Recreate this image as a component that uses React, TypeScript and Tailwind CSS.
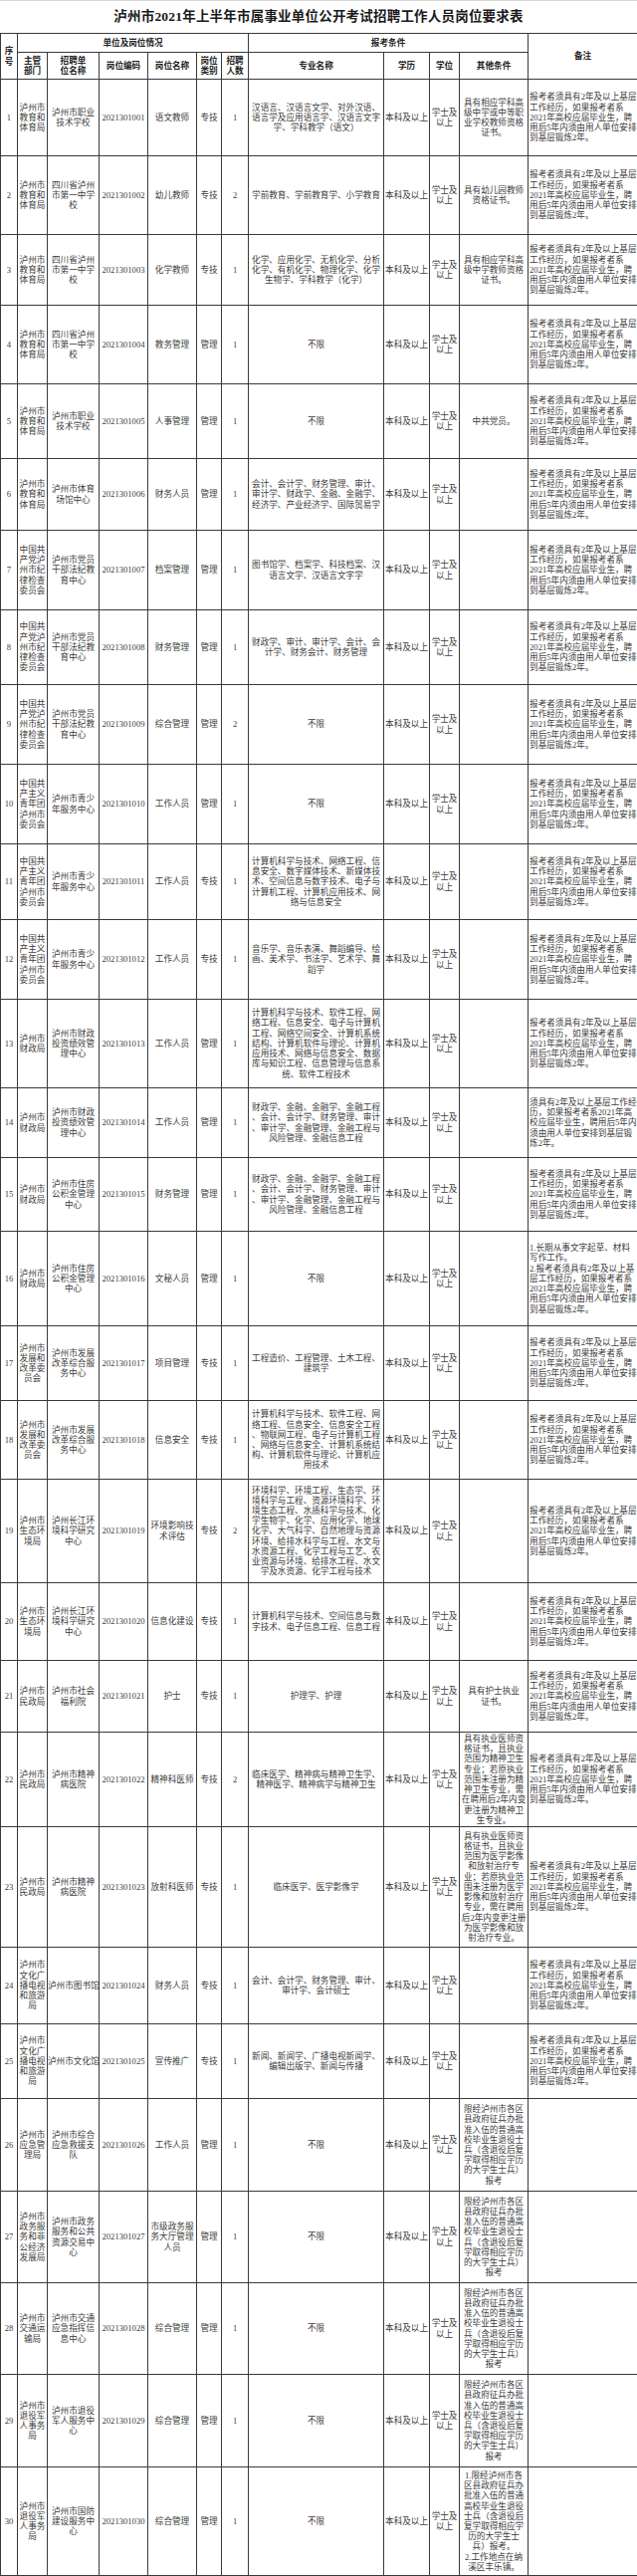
import React from 'react'

type Row = {
  h: string
  dept: string
  unit: string
  name: string
  cat: string
  n: string
  major: string
  other: string
  remark: string
}

const STD =
  '报考者须具有2年及以上基层|工作经历，如果报考者系|2021年高校应届毕业生，聘|用后5年内须由用人单位安排|到基层锻炼2年。'
const SOLDIER =
  '限经泸州市各区|县政府征兵办批|准入伍的普通高|校毕业生退役士|兵（含退役后复|学取得相应学历|的大学生士兵）|报考'

const EDU = '泸州市|教育和|体育局'
const JIW = '中国共|产党泸|州市纪|律检查|委员会'
const TUAN = '中国共|产主义|青年团|泸州市|委员会'
const CZ = '泸州市|财政局'
const FG = '泸州市|发展和|改革委|员会'
const HJ = '泸州市|生态环|境局'
const MZ = '泸州市|民政局'
const WL = '泸州市|文化广|播电视|和旅游|局'
const TY = '泸州市|退役军|人事务|局'
const JR = '财政学、金融、金融学、金融工程|、会计、会计学、财务管理、审计|、审计学、金融管理、金融工程与|风险管理、金融信息工程'

const rows: Row[] = [
  { h: 'h-[77px]', dept: EDU, unit: '泸州市职业|技术学校', name: '语文教师', cat: '专技', n: '1', major: '汉语言、汉语言文学、对外汉语、|语言学及应用语言学、汉语言文字|学、学科教学（语文）', other: '具有相应学科高|级中学或中等职|业学校教师资格|证书。', remark: STD },
  { h: 'h-[79px]', dept: EDU, unit: '四川省泸州|市第一中学|校', name: '幼儿教师', cat: '专技', n: '2', major: '学前教育、学前教育学、小学教育', other: '具有幼儿园教师|资格证书。', remark: STD },
  { h: 'h-[71px]', dept: EDU, unit: '四川省泸州|市第一中学|校', name: '化学教师', cat: '专技', n: '1', major: '化学、应用化学、无机化学、分析|化学、有机化学、物理化学、化学|生物学、学科教学（化学）', other: '具有相应学科高|级中学教师资格|证书。', remark: STD },
  { h: 'h-[79px]', dept: EDU, unit: '四川省泸州|市第一中学|校', name: '教务管理', cat: '管理', n: '1', major: '不限', other: '', remark: STD },
  { h: 'h-[75px]', dept: EDU, unit: '泸州市职业|技术学校', name: '人事管理', cat: '管理', n: '1', major: '不限', other: '中共党员。', remark: STD },
  { h: 'h-[72px]', dept: EDU, unit: '泸州市体育|场馆中心', name: '财务人员', cat: '管理', n: '1', major: '会计、会计学、财务管理、审计、|审计学、财政学、金融、金融学、|经济学、产业经济学、国际贸易学', other: '', remark: STD },
  { h: 'h-[80px]', dept: JIW, unit: '泸州市党员|干部法纪教|育中心', name: '档案管理', cat: '管理', n: '1', major: '图书馆学、档案学、科技档案、汉|语言文学、汉语言文字学', other: '', remark: STD },
  { h: 'h-[75px]', dept: JIW, unit: '泸州市党员|干部法纪教|育中心', name: '财务管理', cat: '管理', n: '1', major: '财政学、审计、审计学、会计、会|计学、财务会计、财务管理', other: '', remark: STD },
  { h: 'h-[80px]', dept: JIW, unit: '泸州市党员|干部法纪教|育中心', name: '综合管理', cat: '管理', n: '2', major: '不限', other: '', remark: STD },
  { h: 'h-[80px]', dept: TUAN, unit: '泸州市青少|年服务中心', name: '工作人员', cat: '管理', n: '1', major: '不限', other: '', remark: STD },
  { h: 'h-[76px]', dept: TUAN, unit: '泸州市青少|年服务中心', name: '工作人员', cat: '专技', n: '1', major: '计算机科学与技术、网络工程、信|息安全、数字媒体技术、新媒体技|术、空间信息与数字技术、电子与|计算机工程、计算机应用技术、网|络与信息安全', other: '', remark: STD },
  { h: 'h-[80px]', dept: TUAN, unit: '泸州市青少|年服务中心', name: '工作人员', cat: '专技', n: '1', major: '音乐学、音乐表演、舞蹈编导、绘|画、美术学、书法学、艺术学、舞|蹈学', other: '', remark: STD },
  { h: 'h-[89px]', dept: CZ, unit: '泸州市财政|投资绩效管|理中心', name: '工作人员', cat: '管理', n: '1', major: '计算机科学与技术、软件工程、网|络工程、信息安全、电子与计算机|工程、网络空间安全、计算机系统|结构、计算机软件与理论、计算机|应用技术、网络与信息安全、数据|库与知识工程、信息管理与信息系|统、软件工程技术', other: '', remark: STD },
  { h: 'h-[70px]', dept: CZ, unit: '泸州市财政|投资绩效管|理中心', name: '工作人员', cat: '管理', n: '1', major: JR, other: '', remark: '须具有2年及以上基层工作经|历，如果报考者系2021年高|校应届毕业生，聘用后5年内|须由用人单位安排到基层锻|炼2年。' },
  { h: 'h-[74px]', dept: CZ, unit: '泸州市住房|公积金管理|中心', name: '财务管理', cat: '管理', n: '1', major: JR, other: '', remark: STD },
  { h: 'h-[95px]', dept: CZ, unit: '泸州市住房|公积金管理|中心', name: '文秘人员', cat: '管理', n: '1', major: '不限', other: '', remark: '1.长期从事文字起草、材料|写作工作。|2.报考者须具有2年及以上基|层工作经历，如果报考者系|2021年高校应届毕业生，聘|用后5年内须由用人单位安排|到基层锻炼2年。' },
  { h: 'h-[75px]', dept: FG, unit: '泸州市发展|改革综合服|务中心', name: '项目管理', cat: '专技', n: '1', major: '工程造价、工程管理、土木工程、|建筑学', other: '', remark: STD },
  { h: 'h-[79px]', dept: FG, unit: '泸州市发展|改革综合服|务中心', name: '信息安全', cat: '专技', n: '1', major: '计算机科学与技术、软件工程、网|络工程、信息安全、信息安全工程|、物联网工程、电子与计算机工程|、网络与信息安全、计算机系统结|构、计算机软件与理论、计算机应|用技术', other: '', remark: STD },
  { h: 'h-[104px]', dept: HJ, unit: '泸州长江环|境科学研究|中心', name: '环境影响技|术评估', cat: '专技', n: '2', major: '环境科学、环境工程、生态学、环|境科学与工程、资源环境科学、环|境生态工程、水质科学与技术、化|学生物学、化学、应用化学、地球|化学、大气科学、自然地理与资源|环境、给排水科学与工程、水文与|水资源工程、化学工程与工艺、农|业资源与环境、给排水工程、水文|学及水资源、化学工程与技术', other: '', remark: STD },
  { h: 'h-[78px]', dept: HJ, unit: '泸州长江环|境科学研究|中心', name: '信息化建设', cat: '专技', n: '1', major: '计算机科学与技术、空间信息与数|字技术、电子信息工程、信息工程', other: '', remark: STD },
  { h: 'h-[72px]', dept: MZ, unit: '泸州市社会|福利院', name: '护士', cat: '专技', n: '1', major: '护理学、护理', other: '具有护士执业|证书。', remark: STD },
  { h: 'h-[95px]', dept: MZ, unit: '泸州市精神|病医院', name: '精神科医师', cat: '专技', n: '2', major: '临床医学、精神病与精神卫生学、|精神医学、精神病学与精神卫生', other: '具有执业医师资|格证书，且执业|范围为精神卫生|专业；若原执业|范围未注册为精|神卫生专业，需|在聘用后2年内变|更注册为精神卫|生专业。', remark: STD },
  { h: 'h-[121px]', dept: MZ, unit: '泸州市精神|病医院', name: '放射科医师', cat: '专技', n: '1', major: '临床医学、医学影像学', other: '具有执业医师资|格证书，且执业|范围为医学影像|和放射治疗专|业；若原执业范|围未注册为医学|影像和放射治疗|专业，需在聘用|后2年内变更注册|为医学影像和放|射治疗专业。', remark: STD },
  { h: 'h-[77px]', dept: WL, unit: '泸州市图书馆', name: '财务人员', cat: '专技', n: '1', major: '会计、会计学、财务管理、审计、|审计学、会计硕士', other: '', remark: STD },
  { h: 'h-[75px]', dept: WL, unit: '泸州市文化馆', name: '宣传推广', cat: '专技', n: '1', major: '新闻、新闻学、广播电视新闻学、|编辑出版学、新闻与传播', other: '', remark: STD },
  { h: 'h-[93px]', dept: '泸州市|应急管|理局', unit: '泸州市综合|应急救援支|队', name: '工作人员', cat: '管理', n: '1', major: '不限', other: SOLDIER, remark: '' },
  { h: 'h-[92px]', dept: '泸州市|政务服|务和非|公经济|发展局', unit: '泸州市政务|服务和公共|资源交易中|心', name: '市级政务服|务大厅管理|人员', cat: '管理', n: '1', major: '不限', other: SOLDIER, remark: '' },
  { h: 'h-[92px]', dept: '泸州市|交通运|输局', unit: '泸州市交通|应急指挥信|息中心', name: '综合管理', cat: '管理', n: '1', major: '不限', other: SOLDIER, remark: '' },
  { h: 'h-[93px]', dept: TY, unit: '泸州市退役|军人服务中|心', name: '综合管理', cat: '管理', n: '1', major: '不限', other: SOLDIER, remark: '' },
  { h: 'h-[109px]', dept: TY, unit: '泸州市国防|建设服务中|心', name: '综合管理', cat: '管理', n: '1', major: '不限', other: '1.限经泸州市各|区县政府征兵办|批准入伍的普通|高校毕业生退役|士兵（含退役后|复学取得相应学|历的大学生士|兵）报考。|2.工作地点在纳|溪区丰乐镇。', remark: '' },
]

function Lines({ text }: { text: string }) {
  if (!text) return null
  return (
    <>
      {text.split('|').map((l, i) => (
        <div key={i} className="whitespace-nowrap">
          {l}
        </div>
      ))}
    </>
  )
}

const td = 'border border-[#3a3a3a] p-0 align-middle text-center'
const th = 'border border-[#3a3a3a] p-0 align-middle text-center font-bold text-[#222]'

export default function App() {
  return (
    <div className="w-[640px] bg-white font-['Liberation_Serif','Noto_Sans_CJK_SC',serif] text-[#3c3c3c]">
      {/* title */}
      <div className="h-[33px] flex items-center justify-center border-t border-[#d8d8d8]">
        <h1 className="text-[13.5px] font-bold text-[#1a1a1a] tracking-[0.2px]">
          泸州市2021年上半年市属事业单位公开考试招聘工作人员岗位要求表
        </h1>
      </div>

      <table className="w-[640px] table-fixed border-collapse text-[8.6px] leading-[10.2px]">
        <colgroup>
          <col className="w-[17px]" />
          <col className="w-[30px]" />
          <col className="w-[52px]" />
          <col className="w-[49px]" />
          <col className="w-[49px]" />
          <col className="w-[25px]" />
          <col className="w-[27px]" />
          <col className="w-[136px]" />
          <col className="w-[46px]" />
          <col className="w-[30px]" />
          <col className="w-[69px]" />
          <col className="w-[110px]" />
        </colgroup>
        <thead>
          <tr className="h-[19px]">
            <th rowSpan={2} className={th}>
              序<br />号
            </th>
            <th colSpan={6} className={th}>
              单位及岗位情况
            </th>
            <th colSpan={4} className={th}>
              报考条件
            </th>
            <th rowSpan={2} className={th}>
              备注
            </th>
          </tr>
          <tr className="h-[27px]">
            <th className={th}>主管<br />部门</th>
            <th className={th}>招聘单<br />位名称</th>
            <th className={th}>岗位编码</th>
            <th className={th}>岗位名称</th>
            <th className={th}>岗位<br />类别</th>
            <th className={th}>招聘<br />人数</th>
            <th className={th}>专业名称</th>
            <th className={th}>学历</th>
            <th className={th}>学位</th>
            <th className={th}>其他条件</th>
          </tr>
        </thead>
        <tbody>
          {rows.map((r, i) => (
            <tr key={i} className={r.h}>
              <td className={td}>{i + 1}</td>
              <td className={td}>
                <Lines text={r.dept} />
              </td>
              <td className={td}>
                <Lines text={r.unit} />
              </td>
              <td className={td}>{`20213010${String(i + 1).padStart(2, '0')}`}</td>
              <td className={td}>
                <Lines text={r.name} />
              </td>
              <td className={td}>{r.cat}</td>
              <td className={td}>{r.n}</td>
              <td className={td}>
                <Lines text={r.major} />
              </td>
              <td className={td}>本科及以上</td>
              <td className={td}>
                学士及
                <br />
                以上
              </td>
              <td className={td}>
                <Lines text={r.other} />
              </td>
              <td className={`${td} !text-left pl-[1px]`}>
                <Lines text={r.remark} />
              </td>
            </tr>
          ))}
        </tbody>
      </table>
    </div>
  )
}
